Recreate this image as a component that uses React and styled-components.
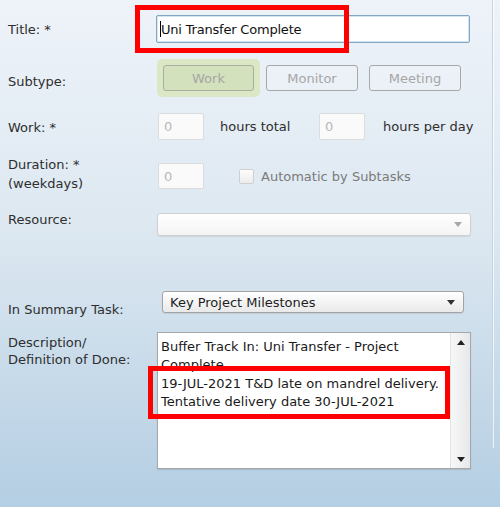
import React from "react";
import styled, { createGlobalStyle } from "styled-components";

const GlobalStyle = createGlobalStyle`
  html, body {
    margin: 0;
    padding: 0;
  }
  body {
    font-family: "DejaVu Sans", Verdana, sans-serif;
    font-size: 13px;
    color: #333;
  }
`;

const Page = styled.div`
  display: flex;
  width: 500px;
  height: 507px;
  overflow: hidden;
  background: linear-gradient(#eef3f9 0%, #dde8f1 45%, #b4cee3 100%);
`;

const Form = styled.div`
  position: relative;
  width: 492px;
  padding-top: 15px;
  box-sizing: border-box;
`;

const Edge = styled.div`
  width: 1px;
  height: 448px;
  border-left: 1px solid #c4d4e1;
  background: rgba(255, 255, 255, 0.7);
`;

const Row = styled.div`
  display: grid;
  grid-template-columns: 157px 313px;
  align-items: start;
  margin-top: ${(p) => p.$gap || 0}px;
  height: ${(p) => p.$h}px;
`;

const Label = styled.div`
  padding-left: 8px;
  margin-top: ${(p) => p.$top || 0}px;
  line-height: ${(p) => p.$lh || 18}px;
  color: #2e2e2e;
  white-space: nowrap;
`;

const Controls = styled.div`
  display: flex;
  align-items: center;
  height: 100%;
  & > * {
    flex-shrink: 0;
  }
`;

const TextInput = styled.div`
  display: flex;
  align-items: center;
  width: 314px;
  height: 28px;
  margin-left: -1px;
  box-sizing: border-box;
  padding-left: 3px;
  background: #fff;
  border: 1px solid #7fa7c2;
  box-shadow: inset 0 0 0 1px #d3e6f1;
  border-radius: 2px;
  color: #111;
  letter-spacing: -0.2px;
`;

const Caret = styled.span`
  display: inline-block;
  width: 1px;
  height: 16px;
  background: #000;
`;

const ToggleSlot = styled.div`
  width: 103px;
  height: 38px;
  padding: 6px;
  box-sizing: border-box;
  border-radius: 5px;
  background: ${(p) => (p.$active ? "#dbe7c5" : "transparent")};
`;

const ToggleButton = styled.div`
  display: flex;
  align-items: center;
  justify-content: center;
  width: ${(p) => (p.$active ? 91 : 92)}px;
  height: 26px;
  box-sizing: border-box;
  border: 1px solid ${(p) => (p.$active ? "#a9ae9f" : "#a8a8a8")};
  border-radius: 3px;
  background: ${(p) => (p.$active ? "#d3e1bc" : "rgba(255,255,255,0.15)")};
  color: #a6a6a6;
`;

const SmallInput = styled.div`
  display: flex;
  align-items: center;
  width: 46px;
  height: ${(p) => p.$h || 27}px;
  margin-left: 1px;
  box-sizing: border-box;
  padding-left: 5px;
  background: #fafafa;
  border: 1px solid #dcdcdc;
  border-radius: 2px;
  color: #b8b8b8;
`;

const Unit = styled.span`
  width: ${(p) => (p.$w ? `${p.$w}px` : "auto")};
  margin-left: ${(p) => p.$ml}px;
  color: #2e2e2e;
  white-space: nowrap;
`;

const Checkbox = styled.span`
  width: 15px;
  height: 15px;
  margin-left: 35px;
  box-sizing: border-box;
  border: 1px solid #cfcfcf;
  border-radius: 2px;
  background: linear-gradient(#fdfdfd, #ececec);
`;

const CheckLabel = styled.span`
  margin-left: 7px;
  color: #7a7a7a;
`;

const Select = styled.div`
  display: flex;
  align-items: center;
  justify-content: space-between;
  width: ${(p) => p.$w}px;
  height: ${(p) => p.$h}px;
  margin-left: ${(p) => p.$ml || 0}px;
  box-sizing: border-box;
  padding: 0 8px 0 7px;
  border: 1px solid ${(p) => (p.$disabled ? "#d0d0d0" : "#a3a3a3")};
  border-radius: 3px;
  background: ${(p) =>
    p.$disabled
      ? "linear-gradient(#ffffff, #f4f4f4)"
      : "linear-gradient(#ffffff, #e9e9e9)"};
  box-shadow: 0 1px 1px rgba(0, 0, 0, 0.08);
  color: #1e1e1e;
`;

const Arrow = styled.span`
  width: 0;
  height: 0;
  border-left: 4px solid transparent;
  border-right: 4px solid transparent;
  border-top: 5px solid ${(p) => p.$color};
`;

const TextArea = styled.div`
  display: flex;
  width: 314px;
  height: 137px;
  box-sizing: border-box;
  border: 1px solid #a7a7a7;
  background: #fff;
  box-shadow: 0 1px 1px rgba(0, 0, 0, 0.1);
`;

const TextBody = styled.div`
  flex: 1;
  padding: 5px 0 0 3px;
  line-height: 18.4px;
  color: #1a1a1a;
  white-space: nowrap;
  overflow: hidden;
`;

const ScrollBar = styled.div`
  display: flex;
  flex-direction: column;
  justify-content: space-between;
  align-items: center;
  width: 20px;
  padding: 7px 0 6px;
  box-sizing: border-box;
  border-left: 1px solid #e2e2e2;
  background: linear-gradient(90deg, #f7f7f7, #e6e8ea);
`;

const ScrollArrow = styled.span`
  width: 0;
  height: 0;
  border-left: 4px solid transparent;
  border-right: 4px solid transparent;
  ${(p) =>
    p.$up ? "border-bottom: 5px solid #222;" : "border-top: 5px solid #222;"}
`;

const Highlight = styled.div`
  position: absolute;
  left: ${(p) => p.$x}px;
  top: ${(p) => p.$y}px;
  width: ${(p) => p.$w}px;
  height: ${(p) => p.$h}px;
  box-sizing: border-box;
  border: 5px solid #ff0000;
  pointer-events: none;
`;

const subtypes = ["Work", "Monitor", "Meeting"];

export default function App() {
  return (
    <>
      <GlobalStyle />
      <Page>
        <Form>
          <Row $h={28}>
            <Label $top={6}>Title: *</Label>
            <TextInput>
              <Caret />
              Uni Transfer Complete
            </TextInput>
          </Row>

          <Row $gap={16} $h={38}>
            <Label $top={14}>Subtype:</Label>
            <Controls>
              {subtypes.map((s, i) => (
                <ToggleSlot key={s} $active={i === 0}>
                  <ToggleButton $active={i === 0}>{s}</ToggleButton>
                </ToggleSlot>
              ))}
            </Controls>
          </Row>

          <Row $gap={16} $h={27}>
            <Label $top={6}>Work: *</Label>
            <Controls>
              <SmallInput>0</SmallInput>
              <Unit $ml={16} $w={98}>hours total</Unit>
              <SmallInput>0</SmallInput>
              <Unit $ml={18}>hours per day</Unit>
            </Controls>
          </Row>

          <Row $gap={19} $h={26}>
            <Label $top={-4} $lh={19}>
              Duration: *
              <br />
              (weekdays)
            </Label>
            <Controls>
              <SmallInput $h={26}>0</SmallInput>
              <Checkbox />
              <CheckLabel>Automatic by Subtasks</CheckLabel>
            </Controls>
          </Row>

          <Row $gap={28} $h={23}>
            <Label $top={-2}>Resource:</Label>
            <Select $w={314} $h={23} $disabled>
              <span />
              <Arrow $color="#a8a8a8" />
            </Select>
          </Row>

          <Row $gap={55} $h={22}>
            <Label $top={10}>In Summary Task:</Label>
            <Select $w={302} $h={22} $ml={5}>
              <span>Key Project Milestones</span>
              <Arrow $color="#333" />
            </Select>
          </Row>

          <Row $gap={19} $h={137}>
            <Label $top={2} $lh={17}>
              Description/
              <br />
              Definition of Done:
            </Label>
            <TextArea>
              <TextBody>
                <div>Buffer Track In: Uni Transfer - Project</div>
                <div>Complete</div>
                <div>19-JUL-2021 T&amp;D late on mandrel delivery.</div>
                <div>Tentative delivery date 30-JUL-2021</div>
              </TextBody>
              <ScrollBar>
                <ScrollArrow $up />
                <ScrollArrow />
              </ScrollBar>
            </TextArea>
          </Row>

          <Highlight $x={135} $y={5} $w={214} $h={48} />
          <Highlight $x={148} $y={366} $w={302} $h={53} />
        </Form>
        <Edge />
      </Page>
    </>
  );
}
